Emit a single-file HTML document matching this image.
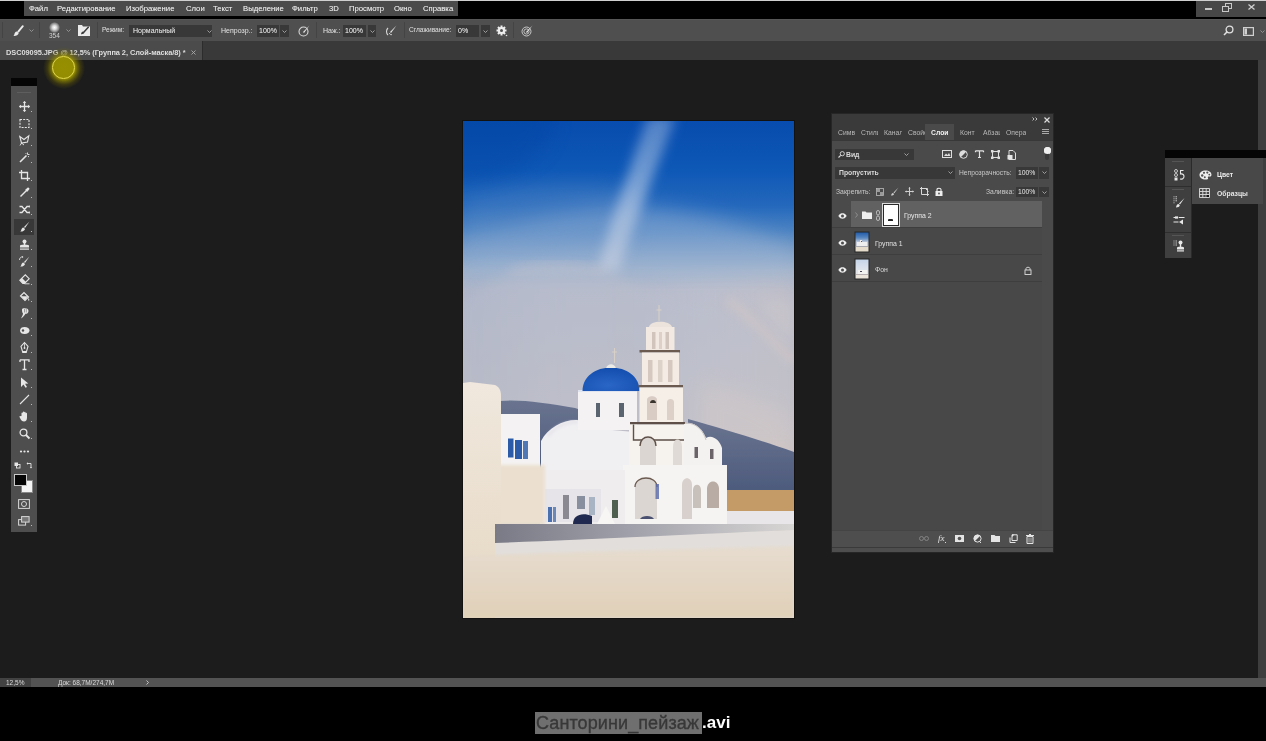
<!DOCTYPE html>
<html><head><meta charset="utf-8">
<style>
*{margin:0;padding:0;box-sizing:border-box}
html,body{width:1266px;height:741px;overflow:hidden;background:#000}
body{position:relative;font-family:"Liberation Sans",sans-serif;color:#ddd}
.a{position:absolute}
.t{position:absolute;white-space:nowrap;line-height:1;will-change:transform}
.m{font-size:7.7px;color:#e2e2e2;top:5px;text-shadow:0 0 0.5px rgba(230,230,230,0.6)}
.o{font-size:7px;color:#cccccc;top:27px;text-shadow:0 0 0.5px rgba(220,220,220,0.5)}
.box{position:absolute;background:#383838;top:25px;height:12px}
.sep{position:absolute;top:22px;width:1px;height:16px;background:#444}
svg{position:absolute;overflow:visible}
</style></head><body>
<!-- top light line -->
<div class="a" style="left:0;top:0;width:1266px;height:1px;background:#d0d0d0"></div>
<!-- menubar -->
<div class="a" style="left:24px;top:1px;width:434px;height:15px;background:#4b4b4b"></div>
<div class="t m" style="left:29px">Файл</div>
<div class="t m" style="left:57px">Редактирование</div>
<div class="t m" style="left:126px">Изображение</div>
<div class="t m" style="left:186px">Слои</div>
<div class="t m" style="left:213px">Текст</div>
<div class="t m" style="left:243px">Выделение</div>
<div class="t m" style="left:292px">Фильтр</div>
<div class="t m" style="left:329px">3D</div>
<div class="t m" style="left:349px">Просмотр</div>
<div class="t m" style="left:394px">Окно</div>
<div class="t m" style="left:423px">Справка</div>
<!-- window controls -->
<div class="a" style="left:1196px;top:1px;width:70px;height:16px;background:#474747"></div>
<div class="a" style="left:1205px;top:8px;width:7px;height:2px;background:#c8c8c8"></div>
<svg style="left:1222px;top:3px" width="10" height="9"><rect x="3.5" y="0.5" width="6" height="5" fill="none" stroke="#c8c8c8" stroke-width="1"/><rect x="0.5" y="3.5" width="6" height="5" fill="#474747" stroke="#c8c8c8" stroke-width="1"/></svg>
<svg style="left:1248px;top:4px" width="7" height="6"><path d="M0.5 0.5L6.5 5.5M6.5 0.5L0.5 5.5" stroke="#d0d0d0" stroke-width="1.3"/></svg>

<!-- options bar -->
<div class="a" style="left:0;top:19px;width:1266px;height:22px;background:#4f4f4f;border-top:1px solid #565656"></div>
<div class="a" style="left:2px;top:22px;width:1px;height:16px;background:#444"></div>
<!-- brush tool icon -->
<svg style="left:12px;top:25px" width="12" height="12" viewBox="0 0 12 12"><path d="M10.8 1.2L6.3 6.6" stroke="#ececec" stroke-width="1.9" stroke-linecap="round"/><path d="M5 6.4C3.2 6.4 2.6 8.2 2.3 9.4C2.1 10.4 1.2 11 1.2 11C3.8 11.3 6.4 10.2 6.7 8Z" fill="#ececec"/></svg>
<svg style="left:29px;top:29px" width="5" height="3"><path d="M0.5 0.5L2.5 2.5L4.5 0.5" fill="none" stroke="#999" stroke-width="0.9"/></svg>
<div class="sep" style="left:39px"></div>
<div class="a" style="left:49px;top:22px;width:11px;height:11px;border-radius:50%;background:radial-gradient(circle,#fff 0,#ddd 25%,rgba(200,200,200,.5) 55%,rgba(83,83,83,0) 72%)"></div>
<div class="t" style="left:48.5px;top:33px;font-size:6.5px;color:#d0d0d0">354</div>
<svg style="left:66px;top:29px" width="5" height="3"><path d="M0.5 0.5L2.5 2.5L4.5 0.5" fill="none" stroke="#999" stroke-width="0.9"/></svg>
<svg style="left:78px;top:25px" width="12" height="11" viewBox="0 0 12 11"><path d="M0 0H4L5 1.5H12V11H0Z" fill="#eaeaea"/><path d="M10.3 2.3L6 7" stroke="#3a3a3a" stroke-width="1.5" stroke-linecap="round"/><path d="M5.2 6.6C3.8 6.6 3.4 7.8 3 9.2C4.8 9.4 6.2 8.6 6.4 7.6Z" fill="#3a3a3a"/></svg>
<div class="sep" style="left:97px"></div>
<div class="t o" style="left:102px;font-size:6.6px">Режим:</div>
<div class="box" style="left:129px;width:83px"></div>
<div class="t o" style="left:133px;color:#dcdcdc">Нормальный</div>
<svg style="left:206.5px;top:30px" width="5" height="3"><path d="M0.5 0.5L2.5 2.5L4.5 0.5" fill="none" stroke="#aaa" stroke-width="0.9"/></svg>
<div class="t o" style="left:221px">Непрозр.:</div>
<div class="box" style="left:257px;width:22px"></div>
<div class="box" style="left:280px;width:9px"></div>
<div class="t o" style="left:259px;color:#e0e0e0">100%</div>
<svg style="left:282px;top:30px" width="5" height="3"><path d="M0.5 0.5L2.5 2.5L4.5 0.5" fill="none" stroke="#aaa" stroke-width="0.9"/></svg>
<svg style="left:298px;top:25px" width="12" height="12" viewBox="0 0 12 12"><circle cx="5.5" cy="6.5" r="4.5" fill="none" stroke="#d8d8d8" stroke-width="1.1"/><path d="M11.5 0.5L5 7L6 8Z" fill="#e8e8e8"/></svg>
<div class="sep" style="left:316px"></div>
<div class="t o" style="left:323px">Наж.:</div>
<div class="box" style="left:343px;width:23px"></div>
<div class="box" style="left:368px;width:8px"></div>
<div class="t o" style="left:345px;color:#e0e0e0">100%</div>
<svg style="left:369.5px;top:30px" width="5" height="3"><path d="M0.5 0.5L2.5 2.5L4.5 0.5" fill="none" stroke="#aaa" stroke-width="0.9"/></svg>
<svg style="left:385px;top:25px" width="12" height="12" viewBox="0 0 12 12"><path d="M3 3C1 5 1 8 3 10" fill="none" stroke="#d8d8d8" stroke-width="1.1"/><path d="M11.5 0.5L5 7L6 8Z" fill="#e8e8e8"/><path d="M4.5 8C4.5 9.5 6 10 7 9.5" fill="none" stroke="#d8d8d8" stroke-width="1"/></svg>
<div class="sep" style="left:404px"></div>
<div class="t o" style="left:409px;font-size:6.6px">Сглаживание:</div>
<div class="box" style="left:456px;width:23px"></div>
<div class="box" style="left:481px;width:9px"></div>
<div class="t o" style="left:458px;color:#e0e0e0">0%</div>
<svg style="left:483px;top:30px" width="5" height="3"><path d="M0.5 0.5L2.5 2.5L4.5 0.5" fill="none" stroke="#aaa" stroke-width="0.9"/></svg>
<svg style="left:496px;top:25px" width="12" height="12" viewBox="0 0 12 12"><g fill="#eee"><circle cx="5.5" cy="5.5" r="3.6"/><rect x="4.5" y="0.5" width="2" height="10"/><rect x="0.5" y="4.5" width="10" height="2"/><rect x="4.5" y="0.5" width="2" height="10" transform="rotate(45 5.5 5.5)"/><rect x="4.5" y="0.5" width="2" height="10" transform="rotate(-45 5.5 5.5)"/></g><circle cx="5.5" cy="5.5" r="1.5" fill="#535353"/><circle cx="10.5" cy="10.5" r="0.8" fill="#ddd"/></svg>
<div class="sep" style="left:513px"></div>
<svg style="left:521px;top:25px" width="12" height="12" viewBox="0 0 12 12"><circle cx="5.5" cy="6.5" r="4.5" fill="none" stroke="#c8c8c8" stroke-width="1"/><circle cx="5.5" cy="6.5" r="2.6" fill="none" stroke="#c8c8c8" stroke-width="0.9"/><path d="M11.5 0.5L5 7L6 8Z" fill="#e8e8e8"/></svg>
<!-- right side of options -->
<svg style="left:1223px;top:25px" width="11" height="11" viewBox="0 0 11 11"><circle cx="6.5" cy="4.5" r="3.4" fill="none" stroke="#e0e0e0" stroke-width="1.3"/><path d="M4.2 6.8L1 10" stroke="#e0e0e0" stroke-width="1.6"/></svg>
<svg style="left:1243px;top:27px" width="11" height="9" viewBox="0 0 11 9"><rect x="0.6" y="0.6" width="9.8" height="7.8" fill="none" stroke="#d0d0d0" stroke-width="1.2"/><rect x="1.5" y="1.5" width="2.5" height="6" fill="#d0d0d0"/></svg>
<svg style="left:1260px;top:30px" width="5" height="3"><path d="M0.5 0.5L2.5 2.5L4.5 0.5" fill="none" stroke="#999" stroke-width="0.9"/></svg>

<!-- tab bar -->
<div class="a" style="left:0;top:41px;width:1266px;height:19px;background:#393939"></div>
<div class="a" style="left:0;top:41px;width:202px;height:19px;background:#4b4b4b"></div>
<div class="a" style="left:202px;top:41px;width:1px;height:19px;background:#2c2c2c"></div>
<div class="t" style="left:5.5px;top:48.5px;font-size:7.4px;font-weight:bold;color:#dedede;letter-spacing:-0.05px">DSC09095.JPG @ 12,5% (Группа 2, Слой-маска/8) *</div>
<svg style="left:190.5px;top:50px" width="5" height="5"><path d="M0.5 0.5L4.5 4.5M4.5 0.5L0.5 4.5" stroke="#aaa" stroke-width="0.9"/></svg>

<!-- canvas -->
<div class="a" style="left:0;top:60px;width:1258px;height:618px;background:#1c1c1c"></div>
<div class="a" style="left:1258px;top:60px;width:8px;height:618px;background:#3e3e3e"></div>

<!-- status bar -->
<div class="a" style="left:0;top:678px;width:1266px;height:9px;background:#535353"></div>
<div class="a" style="left:0;top:678px;width:31px;height:9px;background:#424242"></div>
<div class="t" style="left:5.5px;top:679.5px;font-size:6.5px;color:#dcdcdc">12,5%</div>
<div class="t" style="left:57.5px;top:679.5px;font-size:6.5px;color:#dcdcdc">Док: 68,7M/274,7M</div>
<svg style="left:146px;top:680px" width="3" height="5"><path d="M0.5 0.5L2.5 2.5L0.5 4.5" fill="none" stroke="#ccc" stroke-width="0.9"/></svg>

<div class="a" style="left:11px;top:78px;width:26px;height:8px;background:#050505"></div>
<div class="a" style="left:11px;top:86px;width:26px;height:446px;background:#4e4e4e"></div>
<div class="a" style="left:17px;top:92px;width:14px;height:1px;background:#5e5e5e"></div>
<div class="a" style="left:14px;top:218.5px;width:20px;height:16.5px;background:#383838"></div>
<svg style="left:18.5px;top:100.5px" width="11" height="11" viewBox="0 0 11 11"><path d="M5.5 0.5V10.5M0.5 5.5H10.5" stroke="#e6e6e6" stroke-width="1.3"/><path d="M5.5 0L3.8 2H7.2ZM5.5 11L3.8 9H7.2ZM0 5.5L2 3.8V7.2ZM11 5.5L9 3.8V7.2Z" fill="#e6e6e6"/></svg>
<div class="a" style="left:31px;top:110.5px;width:1.2px;height:1.2px;background:#bbb"></div>
<svg style="left:18.5px;top:117.5px" width="11" height="11" viewBox="0 0 11 11"><rect x="1" y="1.5" width="9" height="8" fill="none" stroke="#e6e6e6" stroke-width="1.1" stroke-dasharray="2 1.2"/></svg>
<div class="a" style="left:31px;top:127.5px;width:1.2px;height:1.2px;background:#bbb"></div>
<svg style="left:18.5px;top:134.5px" width="11" height="11" viewBox="0 0 11 11"><path d="M0.8 1.5L5 4.5L9.8 0.8L8.5 7L2.5 8Z" fill="none" stroke="#e6e6e6" stroke-width="1.1"/><path d="M2.5 8L1 10.5M2.5 8L5 10" stroke="#e6e6e6" stroke-width="0.9"/></svg>
<div class="a" style="left:31px;top:144.5px;width:1.2px;height:1.2px;background:#bbb"></div>
<svg style="left:18.5px;top:151.5px" width="11" height="11" viewBox="0 0 11 11"><path d="M1 10L7.5 3.5" stroke="#e6e6e6" stroke-width="1.6"/><path d="M8.5 0.5V2.5M10.5 2.5H8.5M6.5 1L7.2 1.8M10 5L9 4.2" stroke="#e6e6e6" stroke-width="0.9"/></svg>
<div class="a" style="left:31px;top:161.5px;width:1.2px;height:1.2px;background:#bbb"></div>
<svg style="left:18.5px;top:169.5px" width="11" height="11" viewBox="0 0 11 11"><path d="M2.5 0V8.5H11M0 2.5H8.5V11" fill="none" stroke="#e6e6e6" stroke-width="1.3"/></svg>
<div class="a" style="left:31px;top:179.5px;width:1.2px;height:1.2px;background:#bbb"></div>
<svg style="left:18.5px;top:186.5px" width="11" height="11" viewBox="0 0 11 11"><path d="M1.5 9.5L7 4" stroke="#e6e6e6" stroke-width="1.4"/><path d="M6 3L8.5 0.8C9.5 0 11 1.5 10.2 2.5L8 5Z" fill="#e6e6e6"/></svg>
<div class="a" style="left:31px;top:196.5px;width:1.2px;height:1.2px;background:#bbb"></div>
<svg style="left:18.5px;top:203.5px" width="11" height="11" viewBox="0 0 11 11"><path d="M0.5 2.5H3L8 8.5H10.5M0.5 8.5H3L8 2.5H10.5" fill="none" stroke="#e6e6e6" stroke-width="1.3"/><path d="M10 1L11 2.5L10 4ZM10 7L11 8.5L10 10Z" fill="#e6e6e6"/></svg>
<div class="a" style="left:31px;top:213.5px;width:1.2px;height:1.2px;background:#bbb"></div>
<svg style="left:18.5px;top:221.0px" width="11" height="11" viewBox="0 0 11 11"><path d="M10.5 0.5L5 6L6 7Z" fill="#e6e6e6"/><path d="M4.5 6.5C3 6.5 2.5 8 2.2 9.2C2 10 1 10.5 1 10.5C3.5 10.8 5.8 9.8 6 8Z" fill="#e6e6e6"/></svg>
<div class="a" style="left:31px;top:231.0px;width:1.2px;height:1.2px;background:#bbb"></div>
<svg style="left:18.5px;top:238.5px" width="11" height="11" viewBox="0 0 11 11"><circle cx="5.5" cy="2.5" r="2" fill="#e6e6e6"/><rect x="4.7" y="3.5" width="1.6" height="3" fill="#e6e6e6"/><path d="M1 7C1 6 2 5.8 5.5 5.8C9 5.8 10 6 10 7V8.5H1Z" fill="#e6e6e6"/><rect x="1" y="9.5" width="9" height="1.2" fill="#e6e6e6"/></svg>
<div class="a" style="left:31px;top:248.5px;width:1.2px;height:1.2px;background:#bbb"></div>
<svg style="left:18.5px;top:256.0px" width="11" height="11" viewBox="0 0 11 11"><path d="M10.5 0.5L5 6L6 7Z" fill="#e6e6e6"/><path d="M4.5 6.5C3 6.5 2.5 8 2.2 9.2C2 10 1 10.5 1 10.5C3.5 10.8 5.8 9.8 6 8Z" fill="#e6e6e6"/><path d="M0.5 4C0.5 2 2 0.8 3.5 0.8" fill="none" stroke="#e6e6e6" stroke-width="0.9"/><path d="M3 0L4.5 1L3 2Z" fill="#e6e6e6"/></svg>
<div class="a" style="left:31px;top:266.0px;width:1.2px;height:1.2px;background:#bbb"></div>
<svg style="left:18.5px;top:273.5px" width="11" height="11" viewBox="0 0 11 11"><path d="M4 9.5L0.8 6.3L6.3 0.8L10.2 4.7L5.5 9.5Z" fill="none" stroke="#e6e6e6" stroke-width="1.1"/><path d="M0.8 6.3L3 4L7 8L5.5 9.5H4Z" fill="#e6e6e6"/><path d="M5.5 9.8H10.5" stroke="#e6e6e6" stroke-width="0.9"/></svg>
<div class="a" style="left:31px;top:283.5px;width:1.2px;height:1.2px;background:#bbb"></div>
<svg style="left:18.5px;top:290.5px" width="11" height="11" viewBox="0 0 11 11"><path d="M1.5 5L5 1.5L9.5 6L6 9.5Z" fill="none" stroke="#e6e6e6" stroke-width="1.2"/><path d="M2 5.2H9L6 9Z" fill="#e6e6e6"/><path d="M9.5 7C10.5 8.5 10.5 9.5 9.8 9.8C9 9.8 9 8.5 9.5 7Z" fill="#e6e6e6"/></svg>
<div class="a" style="left:31px;top:300.5px;width:1.2px;height:1.2px;background:#bbb"></div>
<svg style="left:18.5px;top:307.5px" width="11" height="11" viewBox="0 0 11 11"><path d="M3 1.5C3 0.8 4 0.3 5.5 0.3C8 0.3 9.5 1 9.5 3C9.5 5 8 5.8 6.5 5.8C5.5 7.5 4 9.5 2 10.5C3 8.5 4 6.5 4 5.5C3.3 4.8 3 3.5 3 1.5Z" fill="#e6e6e6"/><path d="M5.5 1V4.5M7.3 1V4.5" stroke="#4e4e4e" stroke-width="0.5"/></svg>
<div class="a" style="left:31px;top:317.5px;width:1.2px;height:1.2px;background:#bbb"></div>
<svg style="left:18.5px;top:324.5px" width="11" height="11" viewBox="0 0 11 11"><path d="M1 5.5C1 3 3 2 5.5 2C8.5 2 10.5 3.5 10.5 5.5C10.5 7.5 8.5 9 5.5 9C3 9 1 8 1 5.5Z" fill="#e6e6e6"/><circle cx="4" cy="5.5" r="1.2" fill="#4e4e4e"/></svg>
<div class="a" style="left:31px;top:334.5px;width:1.2px;height:1.2px;background:#bbb"></div>
<svg style="left:18.5px;top:341.5px" width="11" height="11" viewBox="0 0 11 11"><path d="M5.5 0.5L9 4.5L7.5 9.5H3.5L2 4.5Z" fill="none" stroke="#e6e6e6" stroke-width="1.1"/><path d="M5.5 0.5V6" stroke="#e6e6e6" stroke-width="0.8"/><circle cx="5.5" cy="6" r="0.9" fill="#e6e6e6"/><path d="M3.2 10.5H7.8" stroke="#e6e6e6" stroke-width="1"/></svg>
<div class="a" style="left:31px;top:351.5px;width:1.2px;height:1.2px;background:#bbb"></div>
<svg style="left:18.5px;top:359.0px" width="11" height="11" viewBox="0 0 11 11"><path d="M1 0.8H10V3M1 0.8V3M5.5 0.8V10.5M3.5 10.5H7.5" fill="none" stroke="#e6e6e6" stroke-width="1.3"/></svg>
<div class="a" style="left:31px;top:369.0px;width:1.2px;height:1.2px;background:#bbb"></div>
<svg style="left:18.5px;top:376.5px" width="11" height="11" viewBox="0 0 11 11"><path d="M2 0.5L2 10L4.5 7.5L6.5 10.8L8 10L6 6.8L9.3 6.6Z" fill="#e6e6e6"/></svg>
<div class="a" style="left:31px;top:386.5px;width:1.2px;height:1.2px;background:#bbb"></div>
<svg style="left:18.5px;top:393.5px" width="11" height="11" viewBox="0 0 11 11"><path d="M1 10L10 1" stroke="#e6e6e6" stroke-width="1.1"/></svg>
<div class="a" style="left:31px;top:403.5px;width:1.2px;height:1.2px;background:#bbb"></div>
<svg style="left:18.5px;top:410.5px" width="11" height="11" viewBox="0 0 11 11"><path d="M2.5 5V2.2C2.5 1.3 3.8 1.3 3.8 2.2V4.5V1.2C3.8 0.2 5.2 0.2 5.2 1.2V4.5V1.5C5.2 0.6 6.6 0.6 6.6 1.5V4.8V2.5C6.6 1.6 8 1.6 8 2.5V6.5C8 9 7 10.5 5 10.5C3.5 10.5 2.5 9.8 1.8 8.5L0.5 6C0.2 5.3 1.2 4.6 1.8 5.2Z" fill="#e6e6e6"/></svg>
<div class="a" style="left:31px;top:420.5px;width:1.2px;height:1.2px;background:#bbb"></div>
<svg style="left:18.5px;top:427.5px" width="11" height="11" viewBox="0 0 11 11"><circle cx="4.5" cy="4.5" r="3.4" fill="none" stroke="#e6e6e6" stroke-width="1.3"/><path d="M7 7L10.5 10.5" stroke="#e6e6e6" stroke-width="1.8"/></svg>
<div class="a" style="left:31px;top:437.5px;width:1.2px;height:1.2px;background:#bbb"></div>
<svg style="left:18.5px;top:445.5px" width="11" height="11" viewBox="0 0 11 11"><circle cx="2" cy="5.5" r="1.1" fill="#e6e6e6"/><circle cx="5.5" cy="5.5" r="1.1" fill="#e6e6e6"/><circle cx="9" cy="5.5" r="1.1" fill="#e6e6e6"/></svg>
<svg style="left:14px;top:462px" width="20" height="8" viewBox="0 0 20 8"><rect x="0.5" y="0.5" width="3.5" height="3.5" fill="#e6e6e6"/><rect x="2.5" y="2.5" width="3.5" height="3.5" fill="none" stroke="#e6e6e6" stroke-width="0.9"/><path d="M13.5 1.5H17V5" fill="none" stroke="#e6e6e6" stroke-width="0.9"/><path d="M12.5 1.5L14 0.3V2.7ZM17 6.5L15.8 5H18.2Z" fill="#e6e6e6"/></svg>
<div class="a" style="left:21px;top:480px;width:12px;height:12.5px;background:#f4f4f4;border:1px solid #888"></div>
<div class="a" style="left:14px;top:474px;width:12.5px;height:12px;background:#050505;border:1px solid #c8c8c8"></div>
<svg style="left:18px;top:499px" width="12" height="10" viewBox="0 0 12 10"><rect x="0.6" y="0.6" width="10.8" height="8.8" fill="none" stroke="#d8d8d8" stroke-width="1"/><circle cx="6" cy="5" r="2.5" fill="none" stroke="#d8d8d8" stroke-width="1"/></svg>
<svg style="left:18px;top:516px" width="12" height="10" viewBox="0 0 12 10"><rect x="0.6" y="3.6" width="7" height="5.5" fill="none" stroke="#d8d8d8" stroke-width="1"/><rect x="3.6" y="0.6" width="7.5" height="5.5" fill="#777" stroke="#d8d8d8" stroke-width="1"/></svg>
<div class="a" style="left:31px;top:525px;width:1.2px;height:1.2px;background:#bbb"></div>

<div class="a" style="left:462px;top:120px;width:333px;height:499px;background:#141210"></div>
<svg style="left:463px;top:121px" width="331" height="497" viewBox="463 121 331 497">
<defs>
<linearGradient id="sky" x1="0" y1="0" x2="0" y2="1">
<stop offset="0" stop-color="#074cae"/>
<stop offset="0.1" stop-color="#0e58b6"/>
<stop offset="0.17" stop-color="#2468bc"/>
<stop offset="0.22" stop-color="#4a82c2"/>
<stop offset="0.26" stop-color="#789cc6"/>
<stop offset="0.3" stop-color="#a0b2ca"/>
<stop offset="0.34" stop-color="#b4b9ca"/>
<stop offset="0.5" stop-color="#bcbcc6"/>
<stop offset="0.65" stop-color="#c2bec4"/>
<stop offset="0.8" stop-color="#c8c2c2"/>
<stop offset="1" stop-color="#ccc4c2"/>
</linearGradient>
<linearGradient id="skyR" x1="0" y1="0" x2="1" y2="0">
<stop offset="0" stop-color="#6080b0" stop-opacity="0.12"/>
<stop offset="0.5" stop-color="#ffffff" stop-opacity="0"/>
<stop offset="1" stop-color="#e8cfc0" stop-opacity="0.22"/>
</linearGradient>
<linearGradient id="mtn" x1="0" y1="0" x2="0" y2="1">
<stop offset="0" stop-color="#6a7490"/>
<stop offset="1" stop-color="#4c5a7c"/>
</linearGradient>
<linearGradient id="shadow" x1="0" y1="0" x2="1" y2="0">
<stop offset="0" stop-color="#7a7a86"/>
<stop offset="0.45" stop-color="#a0a0aa"/>
<stop offset="1" stop-color="#d8d6d4"/>
</linearGradient>
<linearGradient id="fore" x1="0" y1="0" x2="0" y2="1">
<stop offset="0" stop-color="#e6dccf"/>
<stop offset="1" stop-color="#e0d0b8"/>
</linearGradient>
<linearGradient id="wallL" x1="0" y1="0" x2="0" y2="1">
<stop offset="0" stop-color="#f0e8de"/>
<stop offset="0.5" stop-color="#ebe0d0"/>
<stop offset="1" stop-color="#e4d6c2"/>
</linearGradient>
<radialGradient id="dome" cx="0.45" cy="0.75" r="0.75">
<stop offset="0" stop-color="#2a66c6"/>
<stop offset="1" stop-color="#134eae"/>
</radialGradient>
<clipPath id="pc"><rect x="463" y="121" width="331" height="497"/></clipPath>
<filter id="b4" x="-50%" y="-50%" width="200%" height="200%"><feGaussianBlur stdDeviation="4"/></filter>
<filter id="b6" x="-50%" y="-50%" width="200%" height="200%"><feGaussianBlur stdDeviation="6"/></filter>
<filter id="b8" x="-50%" y="-50%" width="200%" height="200%"><feGaussianBlur stdDeviation="10"/></filter>
<filter id="b1"><feGaussianBlur stdDeviation="0.5"/></filter>
<filter id="b2" x="-20%" y="-20%" width="140%" height="140%"><feGaussianBlur stdDeviation="1.5"/></filter>
</defs>
<g clip-path="url(#pc)">
<rect x="463" y="121" width="331" height="497" fill="url(#sky)"/>
<rect x="463" y="270" width="331" height="348" fill="url(#skyR)" filter="url(#b8)"/>
<ellipse cx="463" cy="121" rx="90" ry="60" fill="#06409c" opacity="0.3" filter="url(#b8)"/>

<!-- wisps -->
<path d="M463 240C500 228 540 215 590 208C630 202 680 208 720 220C760 232 790 245 794 250V275H463Z" fill="#a0b8d8" opacity="0.4" filter="url(#b8)"/>
<path d="M463 200C520 185 580 180 640 190L640 240C580 240 520 250 463 262Z" fill="#6a94c8" opacity="0.3" filter="url(#b8)"/>
<!-- contrail -->
<linearGradient id="ctr" x1="0" y1="0" x2="0" y2="1"><stop offset="0" stop-color="#b8cce8" stop-opacity="0.4"/><stop offset="0.5" stop-color="#c0d0e8" stop-opacity="0.6"/><stop offset="1" stop-color="#d0d4e2" stop-opacity="0.6"/></linearGradient>
<path d="M648 116L676 116L634 226L618 272L598 270L610 226Z" fill="url(#ctr)" filter="url(#b6)"/>
<!-- cloud mass -->
<path d="M463 300C485 285 510 270 540 266C570 263 600 268 630 282C660 294 700 304 740 312C770 320 790 330 794 335V440H463Z" fill="#bcc0ce" opacity="0.4" filter="url(#b6)"/>
<path d="M510 272C540 262 575 262 605 272" fill="none" stroke="#d4c8cc" stroke-width="8" opacity="0.3" filter="url(#b6)"/>
<path d="M728 300C750 318 772 338 794 362" fill="none" stroke="#d8c8c4" stroke-width="7" opacity="0.55" filter="url(#b4)"/>
<path d="M760 300L794 300V345C780 330 770 318 760 300Z" fill="#ccc8cc" opacity="0.5" filter="url(#b6)"/>
<path d="M700 380C740 390 770 400 794 420V470H700Z" fill="#d8ccc8" opacity="0.4" filter="url(#b8)"/>
<!-- mountains -->
<path d="M500 401C520 399 545 403 575 408L605 418L605 470H500Z" fill="url(#mtn)" filter="url(#b1)"/>
<path d="M688 419C720 428 760 440 794 452V492H688Z" fill="url(#mtn)" filter="url(#b1)"/>
<!-- tan field -->
<rect x="727" y="490" width="67" height="22" fill="#c49a66" filter="url(#b1)"/>
<rect x="727" y="511" width="67" height="14" fill="#e8e6e8"/>
<!-- main church white body -->
<path d="M541 441C548 428 562 420 576 420C592 420 605 426 612 430L634 432V527H541Z" fill="#f0eff2" filter="url(#b1)"/>
<path d="M548 436C556 426 566 422 578 422" fill="none" stroke="#e2e0e6" stroke-width="2" filter="url(#b2)"/>
<!-- drum -->
<rect x="578" y="390" width="59" height="40" fill="#f4f2f2"/>
<rect x="578" y="390" width="59" height="2" fill="#e0e4ee"/>
<rect x="596" y="403" width="4" height="14" fill="#5a6470"/>
<rect x="619" y="403" width="5" height="14" fill="#5a6470"/>
<!-- dome -->
<path d="M582.5 391C582.5 376 596 367.5 611 367.5C626 367.5 639.5 376 639.5 391Z" fill="url(#dome)"/>
<path d="M606 368C608 363 614 363 616 368Z" fill="#ecebe8"/>
<path d="M614.5 348V363M612 352H617" stroke="#d8d0c8" stroke-width="1.1"/>
<!-- tower -->
<path d="M649 327C650 320 670 320 672 327Z" fill="#ece4dc"/>
<path d="M659 305V321M656.5 310H661.5" stroke="#d8d0c8" stroke-width="1.1"/>
<rect x="646" y="327" width="28.5" height="24" fill="#f2eae2"/>
<rect x="652" y="332" width="3.5" height="17" fill="#d0c4bc"/>
<rect x="659" y="332" width="3" height="17" fill="#dcd0c8"/>
<rect x="665.5" y="332" width="3.5" height="17" fill="#d0c4bc"/>
<rect x="639.5" y="350" width="40.5" height="2.5" fill="#6a5a50"/>
<rect x="642" y="352.5" width="37" height="33" fill="#f4ece4"/>
<rect x="648" y="360" width="4.5" height="22" fill="#d4c8c0"/>
<rect x="658" y="360" width="4.5" height="22" fill="#ddd2ca"/>
<rect x="668" y="360" width="4.5" height="22" fill="#d4c8c0"/>
<rect x="638.5" y="385" width="44.5" height="2.5" fill="#6a5a50"/>
<rect x="639.5" y="387.5" width="43.5" height="35" fill="#f6efe8"/>
<path d="M647 420V400C647 395 657 395 657 400V420Z" fill="#d8ccc4"/>
<path d="M650 403C650 399 656 399 656 403Z" fill="#3a342e"/>
<path d="M667 420V402C667 398 674 398 674 402V420Z" fill="#dcd0c8"/>
<rect x="630" y="422" width="55" height="2.5" fill="#5e5048"/>
<!-- tower arch section -->
<rect x="629" y="424.5" width="58" height="41" fill="#f6f2ee"/>
<path d="M633.5 424.5V440H685V424.5" fill="none" stroke="#5e5048" stroke-width="1.4"/>
<path d="M640 465V446C640 434 656 434 656 446V465Z" fill="#dcd6d2"/>
<path d="M640 446C640 434 656 434 656 446" fill="none" stroke="#5e5048" stroke-width="1.4"/>
<path d="M673 465V447C673 437 682 437 682 447V465Z" fill="#e0dad6"/>
<!-- right gables -->
<path d="M684 466V424C694 421 702 428 706 438C712 434 720 440 722 448V466Z" fill="#f4f2f0"/>
<path d="M686 423C696 423 703 430 706 440" fill="none" stroke="#c8c4c4" stroke-width="1"/>
<rect x="694.5" y="447" width="3.5" height="11" fill="#6a6468"/>
<rect x="710" y="449" width="3.5" height="10" fill="#6a6468"/>
<!-- lower church -->
<rect x="623" y="465" width="104" height="62" fill="#f6f4f2"/>
<path d="M635 519V487C635 475 657 475 657 487V519Z" fill="#dcd6d2"/>
<path d="M635 487C635 475 657 475 657 487" fill="none" stroke="#6a5a50" stroke-width="1.3"/>
<path d="M682 519V485C682 476 692 476 692 485V519Z" fill="#d8d0cc"/>
<path d="M693 508V490C693 483 701 483 701 490V508Z" fill="#c8c0ba"/>
<path d="M707 508V489C707 479 719 479 719 489V508Z" fill="#b8aca4"/>
<rect x="655.5" y="484" width="3.5" height="15" fill="#5868a8" opacity="0.8"/>
<path d="M640 519C642 515 652 515 654 519Z" fill="#4a5070"/>
<!-- small buildings left of church -->
<rect x="540" y="470" width="85" height="57" fill="#efedee"/>
<rect x="545" y="489" width="56" height="33" fill="#e6e4e8"/>
<rect x="563" y="495" width="6" height="24" fill="#8a8890"/>
<rect x="577" y="496" width="8" height="13" fill="#8890a0"/>
<rect x="589" y="497" width="6" height="18" fill="#a8b4c4"/>
<rect x="548" y="507" width="4" height="15" fill="#4a70b0"/>
<rect x="553" y="507" width="3" height="15" fill="#6a88b8"/>
<path d="M573 524C573 515 582 512 592 516V524Z" fill="#202a50"/>
<path d="M596 526L606 506L616 526Z" fill="#f8f6f4"/>
<rect x="612" y="500" width="6" height="18" fill="#506050"/>
<!-- blue window building -->
<rect x="500" y="414" width="40" height="108" fill="#f4f2f2"/>
<rect x="498" y="465" width="47" height="60" fill="#ebe0d0" filter="url(#b2)"/>
<rect x="508" y="438.5" width="5.5" height="19" fill="#2a5aa8"/>
<rect x="515" y="440" width="7" height="19" fill="#2a5aa8"/>
<rect x="523" y="441" width="5" height="18" fill="#5078b4"/>
<!-- left wall -->
<path d="M463 383L470 382L495 385C499 387 501 390 501 396V618H463Z" fill="url(#wallL)" filter="url(#b1)"/>
<!-- shadow band & foreground -->
<path d="M495 524H794V530C720 534 600 539 495 544Z" fill="url(#shadow)" filter="url(#b1)"/>
<path d="M495 543C600 539 720 533 794 530V618H495Z" fill="#e2dedb"/>
<path d="M463 556C600 551 720 548 794 546V618H463Z" fill="url(#fore)" filter="url(#b2)"/>
</g>
</svg>

<div class="a" style="left:831px;top:113px;width:223px;height:440px;background:#262626"></div>
<div class="a" style="left:832px;top:114px;width:221px;height:438px;background:#484848"></div>
<div class="a" style="left:832px;top:114px;width:221px;height:27px;background:#3a3a3a"></div>
<svg style="left:1032px;top:117px" width="6" height="4"><path d="M0.5 0.5L2 2L0.5 3.5M3.5 0.5L5 2L3.5 3.5" fill="none" stroke="#ccc" stroke-width="0.9"/></svg>
<svg style="left:1044px;top:116.5px" width="6" height="6"><path d="M0.5 0.5L5.5 5.5M5.5 0.5L0.5 5.5" stroke="#ddd" stroke-width="1.2"/></svg>
<div class="a" style="left:925px;top:124px;width:28.5px;height:17px;background:#4a4a4a"></div>
<div class="t" style="left:838px;top:129.5px;font-size:6.8px;color:#b8b8b8;width:17px;overflow:hidden">Симв</div>
<div class="t" style="left:861px;top:129.5px;font-size:6.8px;color:#b8b8b8;width:17px;overflow:hidden">Стили</div>
<div class="t" style="left:884px;top:129.5px;font-size:6.8px;color:#b8b8b8;width:18px;overflow:hidden">Каналы</div>
<div class="t" style="left:907.5px;top:129.5px;font-size:6.8px;color:#b8b8b8;width:17px;overflow:hidden">Свойс</div>
<div class="t" style="left:959.5px;top:129.5px;font-size:6.8px;color:#b8b8b8;width:18px;overflow:hidden">Конт</div>
<div class="t" style="left:983px;top:129.5px;font-size:6.8px;color:#b8b8b8;width:17px;overflow:hidden">Абзац</div>
<div class="t" style="left:1006px;top:129.5px;font-size:6.8px;color:#b8b8b8;width:20px;overflow:hidden">Опера</div>
<div class="t" style="left:930.5px;top:129.5px;font-size:6.8px;font-weight:bold;color:#f0f0f0">Слои</div>
<svg style="left:1042px;top:129px" width="7" height="6"><path d="M0 0.5H7M0 2.5H7M0 4.5H7" stroke="#aaa" stroke-width="1"/></svg>
<div class="a" style="left:832px;top:140px;width:221px;height:1px;background:#383838"></div>
<div class="a" style="left:832px;top:141px;width:221px;height:60px;background:#4a4a4a"></div>
<div class="a" style="left:835px;top:149px;width:79px;height:11px;background:#383838"></div>
<svg style="left:838px;top:151px" width="7" height="7" viewBox="0 0 7 7"><circle cx="4.3" cy="2.7" r="2.1" fill="none" stroke="#ddd" stroke-width="0.9"/><path d="M2.7 4.3L0.5 6.5" stroke="#ddd" stroke-width="1.1"/></svg>
<div class="t" style="left:846px;top:151.5px;font-size:6.8px;font-weight:bold;color:#d8d8d8">Вид</div>
<svg style="left:904px;top:153px" width="5" height="3"><path d="M0.5 0.5L2.5 2.5L4.5 0.5" fill="none" stroke="#aaa" stroke-width="0.9"/></svg>
<svg style="left:942px;top:150px" width="10" height="8" viewBox="0 0 10 8"><rect x="0.5" y="0.5" width="9" height="7" fill="none" stroke="#ddd" stroke-width="1"/><path d="M2 6L4 3.5L5.5 5L7 3L8.5 6Z" fill="#ddd"/></svg>
<svg style="left:958.5px;top:149.5px" width="9" height="9" viewBox="0 0 9 9"><circle cx="4.5" cy="4.5" r="3.8" fill="none" stroke="#ddd" stroke-width="1"/><path d="M4.5 0.7A3.8 3.8 0 0 0 4.5 8.3Z" fill="#ddd" transform="rotate(45 4.5 4.5)"/></svg>
<svg style="left:975px;top:150px" width="9" height="8" viewBox="0 0 9 8"><path d="M0.5 0.8H8.5M4.5 0.8V7.5M3 7.5H6M0.5 0.8V2.2M8.5 0.8V2.2" fill="none" stroke="#e4e4e4" stroke-width="1.2"/></svg>
<svg style="left:991px;top:150px" width="9" height="9" viewBox="0 0 9 9"><rect x="1.5" y="1.5" width="6" height="6" fill="none" stroke="#ddd" stroke-width="1"/><rect x="0" y="0" width="2.5" height="2.5" fill="#ddd"/><rect x="6.5" y="0" width="2.5" height="2.5" fill="#ddd"/><rect x="0" y="6.5" width="2.5" height="2.5" fill="#ddd"/><rect x="6.5" y="6.5" width="2.5" height="2.5" fill="#ddd"/></svg>
<svg style="left:1007px;top:149.5px" width="9" height="10" viewBox="0 0 9 10"><path d="M2 0.5H6L8.5 3V9.5H2Z" fill="none" stroke="#ddd" stroke-width="1"/><rect x="0.5" y="5" width="5" height="4.5" fill="#e6e6e6"/></svg>
<div class="a" style="left:1043.5px;top:147px;width:7px;height:7px;border-radius:50%;background:#f0f0f0"></div>
<div class="a" style="left:1045px;top:152px;width:4px;height:8px;border-radius:2px;background:#3a3a3a"></div>
<div class="a" style="left:1043.5px;top:147px;width:7px;height:7px;border-radius:50%;background:#f0f0f0"></div>
<div class="a" style="left:832px;top:161.5px;width:221px;height:1px;background:#4a4a4a"></div>
<div class="a" style="left:835px;top:167px;width:120px;height:11.5px;background:#383838"></div>
<div class="t" style="left:839px;top:169.5px;font-size:6.8px;font-weight:bold;color:#d8d8d8">Пропустить</div>
<svg style="left:947.5px;top:171px" width="5" height="3"><path d="M0.5 0.5L2.5 2.5L4.5 0.5" fill="none" stroke="#aaa" stroke-width="0.9"/></svg>
<div class="t" style="left:959px;top:169.5px;font-size:6.7px;color:#c8c8c8;width:54px;overflow:hidden">Непрозрачность:</div>
<div class="a" style="left:1016px;top:167px;width:21.5px;height:11.5px;background:#383838"></div>
<div class="a" style="left:1039px;top:167px;width:9.5px;height:11.5px;background:#383838"></div>
<div class="t" style="left:1018px;top:169.5px;font-size:6.8px;color:#e8e8e8">100%</div>
<svg style="left:1041.5px;top:171px" width="5" height="3"><path d="M0.5 0.5L2.5 2.5L4.5 0.5" fill="none" stroke="#aaa" stroke-width="0.9"/></svg>
<div class="a" style="left:832px;top:180px;width:221px;height:1px;background:#4a4a4a"></div>
<div class="t" style="left:835.5px;top:188.5px;font-size:6.8px;color:#c8c8c8">Закрепить:</div>
<svg style="left:876px;top:187.5px" width="8" height="8" viewBox="0 0 8 8"><rect x="0.5" y="0.5" width="7" height="7" fill="none" stroke="#bbb" stroke-width="0.8"/><rect x="1" y="1" width="3" height="3" fill="#999"/><rect x="4" y="4" width="3" height="3" fill="#999"/></svg>
<svg style="left:890px;top:187px" width="9" height="9" viewBox="0 0 9 9"><path d="M8.5 0.5L3.5 5.5L4.3 6.3Z" fill="#cfcfcf"/><path d="M3 6C1.8 6 1.5 7.2 1 8.5C2.5 8.5 4 8 4 7Z" fill="#cfcfcf"/></svg>
<svg style="left:905px;top:187px" width="9" height="9" viewBox="0 0 9 9"><path d="M4.5 0.5V8.5M0.5 4.5H8.5" stroke="#cfcfcf" stroke-width="1"/><path d="M4.5 0L3.3 1.5H5.7ZM4.5 9L3.3 7.5H5.7ZM0 4.5L1.5 3.3V5.7ZM9 4.5L7.5 3.3V5.7Z" fill="#cfcfcf"/></svg>
<svg style="left:919.5px;top:187px" width="9" height="9" viewBox="0 0 9 9"><path d="M1.5 0V7.5H9M0 1.5H7.5V9" fill="none" stroke="#d8d8d8" stroke-width="1"/><path d="M5 1L8.5 4.5" stroke="#d8d8d8" stroke-width="1"/></svg>
<svg style="left:934.5px;top:186.5px" width="8" height="9" viewBox="0 0 8 9"><path d="M2 4V2.5C2 0.8 6 0.8 6 2.5V4" fill="none" stroke="#eee" stroke-width="1.1"/><rect x="0.5" y="4" width="7" height="5" fill="#eee"/><circle cx="4" cy="6.5" r="0.9" fill="#535353"/></svg>
<div class="t" style="left:986px;top:188.5px;font-size:6.8px;color:#c8c8c8">Заливка:</div>
<div class="a" style="left:1016px;top:186.5px;width:21.5px;height:10px;background:#383838"></div>
<div class="a" style="left:1039px;top:186.5px;width:9.5px;height:10px;background:#383838"></div>
<div class="t" style="left:1018px;top:188.5px;font-size:6.8px;color:#e8e8e8">100%</div>
<svg style="left:1041.5px;top:190.5px" width="5" height="3"><path d="M0.5 0.5L2.5 2.5L4.5 0.5" fill="none" stroke="#aaa" stroke-width="0.9"/></svg>
<div class="a" style="left:832px;top:201px;width:210px;height:26px;background:#4a4a4a"></div>
<div class="a" style="left:851px;top:201px;width:191px;height:26px;background:#616161"></div>
<div class="a" style="left:832px;top:227px;width:210px;height:1px;background:#3e3e3e"></div>
<div class="a" style="left:832px;top:228px;width:210px;height:26px;background:#484848"></div>
<div class="a" style="left:832px;top:254px;width:210px;height:1px;background:#3e3e3e"></div>
<div class="a" style="left:832px;top:255px;width:210px;height:26px;background:#484848"></div>
<div class="a" style="left:832px;top:281px;width:210px;height:1px;background:#3e3e3e"></div>
<div class="a" style="left:1042px;top:201px;width:11px;height:329px;background:#4a4a4a"></div>
<svg style="left:838px;top:213px" width="9" height="6" viewBox="0 0 9 6"><path d="M0.3 3C1.8 0.8 3 0.3 4.5 0.3C6 0.3 7.2 0.8 8.7 3C7.2 5.2 6 5.7 4.5 5.7C3 5.7 1.8 5.2 0.3 3Z" fill="#eee"/><circle cx="4.5" cy="3" r="1.5" fill="#4d4d4d"/></svg>
<svg style="left:838px;top:240px" width="9" height="6" viewBox="0 0 9 6"><path d="M0.3 3C1.8 0.8 3 0.3 4.5 0.3C6 0.3 7.2 0.8 8.7 3C7.2 5.2 6 5.7 4.5 5.7C3 5.7 1.8 5.2 0.3 3Z" fill="#eee"/><circle cx="4.5" cy="3" r="1.5" fill="#4d4d4d"/></svg>
<svg style="left:838px;top:267px" width="9" height="6" viewBox="0 0 9 6"><path d="M0.3 3C1.8 0.8 3 0.3 4.5 0.3C6 0.3 7.2 0.8 8.7 3C7.2 5.2 6 5.7 4.5 5.7C3 5.7 1.8 5.2 0.3 3Z" fill="#eee"/><circle cx="4.5" cy="3" r="1.5" fill="#4d4d4d"/></svg>
<svg style="left:855px;top:211.5px" width="3" height="6"><path d="M0.5 0.5L2.5 3L0.5 5.5" fill="none" stroke="#999" stroke-width="0.8"/></svg>
<svg style="left:862px;top:211px" width="10" height="8" viewBox="0 0 10 8"><path d="M0 0.5H3.5L4.5 1.5H10V8H0Z" fill="#eee"/></svg>
<svg style="left:876px;top:209.5px" width="4" height="11" viewBox="0 0 4 11"><rect x="0.5" y="0.5" width="3" height="4.5" rx="1.5" fill="none" stroke="#ccc" stroke-width="0.8"/><rect x="0.5" y="6" width="3" height="4.5" rx="1.5" fill="none" stroke="#ccc" stroke-width="0.8"/></svg>
<div class="a" style="left:882px;top:203px;width:18px;height:23.5px;background:#fff;border:1px solid #ddd;outline:1px solid #2a2a2a;outline-offset:-2px"></div>
<div class="a" style="left:884px;top:205px;width:14px;height:19.5px;background:#fff"></div>
<div class="a" style="left:887.5px;top:219px;width:5px;height:2px;background:#222;border-radius:1px 1px 0 0"></div>
<div class="t" style="left:904px;top:212.5px;font-size:6.9px;color:#e8e8e8">Группа 2</div>
<svg style="left:855px;top:232px" width="14" height="20" viewBox="0 0 14 20"><defs><linearGradient id="th1" x1="0" y1="0" x2="0" y2="1"><stop offset="0" stop-color="#1e58a8"/><stop offset="0.3" stop-color="#5a88c0"/><stop offset="0.5" stop-color="#c0c8d8"/><stop offset="1" stop-color="#d8d4d0"/></linearGradient></defs><rect x="0" y="0" width="14" height="20" fill="url(#th1)"/><rect x="2" y="10" width="10" height="5" fill="#eeeeee"/><rect x="5" y="8" width="2" height="3" fill="#f0ebe6"/><rect x="6" y="9" width="1" height="1" fill="#556"/><rect x="0" y="14" width="14" height="6" fill="#e6dccc"/><rect x="1" y="14" width="12" height="1" fill="#a8a8b0"/><rect x="0" y="0" width="14" height="20" fill="none" stroke="#262626" stroke-width="1"/></svg>
<div class="t" style="left:875px;top:240.5px;font-size:6.9px;color:#e0e0e0">Группа 1</div>
<svg style="left:855px;top:259px" width="14" height="20" viewBox="0 0 14 20"><defs><linearGradient id="th2" x1="0" y1="0" x2="0" y2="1"><stop offset="0" stop-color="#c4d4ea"/><stop offset="0.5" stop-color="#dde3ec"/><stop offset="1" stop-color="#ece6de"/></linearGradient></defs><rect x="0" y="0" width="14" height="20" fill="url(#th2)"/><rect x="3" y="11" width="9" height="4" fill="#f4f2f0"/><rect x="5" y="12" width="2" height="1" fill="#445"/><rect x="1" y="15" width="12" height="1" fill="#b8b0b0"/><rect x="0" y="16" width="14" height="4" fill="#ebe4da"/><rect x="0" y="0" width="14" height="20" fill="none" stroke="#262626" stroke-width="1"/></svg>
<div class="t" style="left:875px;top:266.5px;font-size:6.9px;color:#d8d8d8">Фон</div>
<svg style="left:1024px;top:265.5px" width="8" height="9" viewBox="0 0 8 9"><path d="M2 4V2.5C2 0.8 6 0.8 6 2.5V4" fill="none" stroke="#ddd" stroke-width="0.9"/><rect x="1" y="4" width="6" height="4.5" fill="none" stroke="#ddd" stroke-width="0.9"/></svg>
<div class="a" style="left:832px;top:530px;width:221px;height:1px;background:#444"></div>
<div class="a" style="left:832px;top:531px;width:221px;height:16px;background:#4e4e4e"></div>
<div class="a" style="left:832px;top:547px;width:221px;height:1px;background:#3a3a3a"></div>
<div class="a" style="left:832px;top:548px;width:221px;height:4px;background:#4e4e4e"></div>
<svg style="left:918.5px;top:536px" width="10" height="5" viewBox="0 0 10 5"><circle cx="2.5" cy="2.5" r="2" fill="none" stroke="#888" stroke-width="0.9"/><circle cx="7.5" cy="2.5" r="2" fill="none" stroke="#888" stroke-width="0.9"/></svg>
<div class="t" style="left:937.5px;top:533.5px;font-size:9px;font-style:italic;font-family:'Liberation Serif';color:#e4e4e4">fx</div>
<div class="a" style="left:945px;top:542px;width:1.3px;height:1.3px;background:#ddd"></div>
<svg style="left:954.5px;top:534.5px" width="9" height="7" viewBox="0 0 9 7"><rect x="0" y="0" width="9" height="7" fill="#e4e4e4"/><circle cx="4.5" cy="3.5" r="1.8" fill="#535353"/></svg>
<svg style="left:972.5px;top:534px" width="9" height="9" viewBox="0 0 9 9"><circle cx="4.5" cy="4.5" r="3.6" fill="none" stroke="#e4e4e4" stroke-width="1"/><path d="M7.05 1.95A3.6 3.6 0 0 0 1.95 7.05Z" fill="#e4e4e4"/></svg>
<div class="a" style="left:980px;top:541.5px;width:1.3px;height:1.3px;background:#ddd"></div>
<svg style="left:990.5px;top:534.5px" width="9" height="7" viewBox="0 0 9 7"><path d="M0 0H3.5L4.5 1H9V7H0Z" fill="#e4e4e4"/></svg>
<svg style="left:1008.5px;top:534px" width="9" height="9" viewBox="0 0 9 9"><path d="M1 3.5V8.5H6.5" fill="none" stroke="#e4e4e4" stroke-width="1"/><path d="M3 0.8H8.2V6.5H3Z" fill="none" stroke="#e4e4e4" stroke-width="1"/><path d="M3 0.5L5.5 0.5L3 3Z" fill="#e4e4e4"/></svg>
<svg style="left:1026px;top:533.5px" width="8" height="10" viewBox="0 0 8 10"><path d="M0 1.5H8M3 0.5H5" stroke="#e4e4e4" stroke-width="1"/><path d="M1 2.5H7V9.5H1Z" fill="none" stroke="#e4e4e4" stroke-width="1"/><path d="M3 3.5V8.5M5 3.5V8.5" stroke="#e4e4e4" stroke-width="0.7"/></svg>

<div class="a" style="left:1165px;top:150px;width:101px;height:8px;background:#050505"></div>
<div class="a" style="left:1165px;top:158px;width:26px;height:100px;background:#3f3f3f"></div>
<div class="a" style="left:1165px;top:186px;width:26px;height:1px;background:#2e2e2e"></div>
<div class="a" style="left:1165px;top:231.5px;width:26px;height:1px;background:#2e2e2e"></div>
<div class="a" style="left:1190.5px;top:158px;width:1.5px;height:100px;background:#2a2a2a"></div>
<div class="a" style="left:1192px;top:158px;width:71px;height:46px;background:#484848"></div>
<div class="a" style="left:1172px;top:161px;width:12px;height:1px;background:#555"></div>
<div class="a" style="left:1172px;top:189px;width:12px;height:1px;background:#555"></div>
<div class="a" style="left:1172px;top:234.5px;width:12px;height:1px;background:#555"></div>
<svg style="left:1173.5px;top:169px" width="11" height="12" viewBox="0 0 11 12"><rect x="0.5" y="0.5" width="3" height="3" rx="1.5" fill="none" stroke="#e8e8e8" stroke-width="0.8"/><rect x="0.5" y="4.5" width="3" height="3" rx="1.5" fill="none" stroke="#e8e8e8" stroke-width="0.8"/><rect x="0.5" y="8.5" width="3" height="3" fill="#e8e8e8"/><path d="M6 1.5H9.5M6.5 1.5V5C9 4.5 10 6 10 7.5C10 9.5 8 10.5 6 10" fill="none" stroke="#e8e8e8" stroke-width="1.1"/></svg>
<svg style="left:1173px;top:196px" width="12" height="12" viewBox="0 0 12 12"><path d="M0.5 0.8H1.5M0.5 2.8H1.5M0.5 4.8H1.5M0.5 6.8H1.5M2.5 0.8H4M2.5 2.8H4M2.5 4.8H4" stroke="#e8e8e8" stroke-width="0.8"/><path d="M11.5 2L6 7.5L7 8.5Z" fill="#e8e8e8"/><path d="M5.5 8C4 8 3.5 9.5 3 11.5C5 11.5 6.5 10.5 6.8 9.2Z" fill="#e8e8e8"/></svg>
<svg style="left:1173px;top:215px" width="12" height="10" viewBox="0 0 12 10"><path d="M0.5 2.5H4M6 2.5H11.5M0.5 7H5.5" stroke="#e8e8e8" stroke-width="1"/><path d="M1 2.5L3 1V4Z" fill="#e8e8e8"/><path d="M6 7L10 4.5V9.5Z" fill="#e8e8e8"/><circle cx="4" cy="2.5" r="1.3" fill="#e8e8e8"/></svg>
<svg style="left:1172.5px;top:240px" width="12" height="12" viewBox="0 0 12 12"><path d="M0.5 1H1.5M0.5 3H1.5M0.5 5H1.5M2.5 1H4M2.5 3H4M2.5 5H4" stroke="#e8e8e8" stroke-width="0.8"/><circle cx="7.5" cy="2.5" r="2" fill="#e8e8e8"/><rect x="6.8" y="4" width="1.4" height="3" fill="#e8e8e8"/><path d="M4 8C4 7 5 6.8 7.5 6.8C10 6.8 11 7 11 8V9.5H4Z" fill="#e8e8e8"/><rect x="4" y="10.3" width="7" height="1.2" fill="#e8e8e8"/></svg>
<svg style="left:1199px;top:170px" width="13" height="10" viewBox="0 0 13 10"><path d="M6.5 0.5C10 0.5 12.5 2.3 12.5 4.8C12.5 6.5 11 6.8 10 6.5C9 6.3 8.5 7 9 8C9.5 9 8.5 9.5 6.5 9.5C3 9.5 0.5 7.5 0.5 5C0.5 2.5 3 0.5 6.5 0.5Z" fill="#eee"/><circle cx="3.2" cy="5.5" r="1.2" fill="#535353"/><circle cx="5" cy="2.8" r="1.1" fill="#535353"/><circle cx="8.3" cy="2.6" r="1.1" fill="#535353"/><circle cx="10.3" cy="4.6" r="0.9" fill="#535353"/><circle cx="5.8" cy="7.3" r="1" fill="#535353"/></svg>
<div class="t" style="left:1217px;top:171.5px;font-size:6.8px;font-weight:bold;color:#ececec">Цвет</div>
<svg style="left:1199px;top:188px" width="11" height="10" viewBox="0 0 11 10"><path d="M0.5 0.5H10.5V9.5H0.5ZM0.5 3.5H10.5M0.5 6.5H10.5M3.8 0.5V9.5M7.2 0.5V9.5" fill="none" stroke="#ddd" stroke-width="0.9"/><rect x="7.5" y="7" width="2.5" height="2" fill="#111"/></svg>
<div class="t" style="left:1217px;top:190.5px;font-size:6.8px;font-weight:bold;color:#e4e4e4">Образцы</div>

<!-- cursor -->
<div class="a" style="left:42.6px;top:46.5px;width:42px;height:42px;border-radius:50%;background:radial-gradient(circle closest-side,rgba(155,147,0,0.97) 0,rgba(155,147,0,0.95) 52%,rgba(140,132,0,0.65) 64%,rgba(120,110,0,0.3) 80%,rgba(110,100,0,0) 100%)"></div>
<div class="a" style="left:52.3px;top:56.2px;width:22.6px;height:22.6px;border-radius:50%;border:1.2px solid #e0d850"></div>
<!-- caption -->
<div class="a" style="left:535px;top:712px;width:167px;height:22px;background:#6f6f6f"></div>
<div class="t" style="left:536px;top:714px;font-size:18px;color:#383838;letter-spacing:0.1px;-webkit-text-stroke:0.35px #383838">Санторини_пейзаж</div>
<div class="t" style="left:702px;top:714px;font-size:17px;font-weight:bold;color:#fff">.avi</div>
</body></html>
